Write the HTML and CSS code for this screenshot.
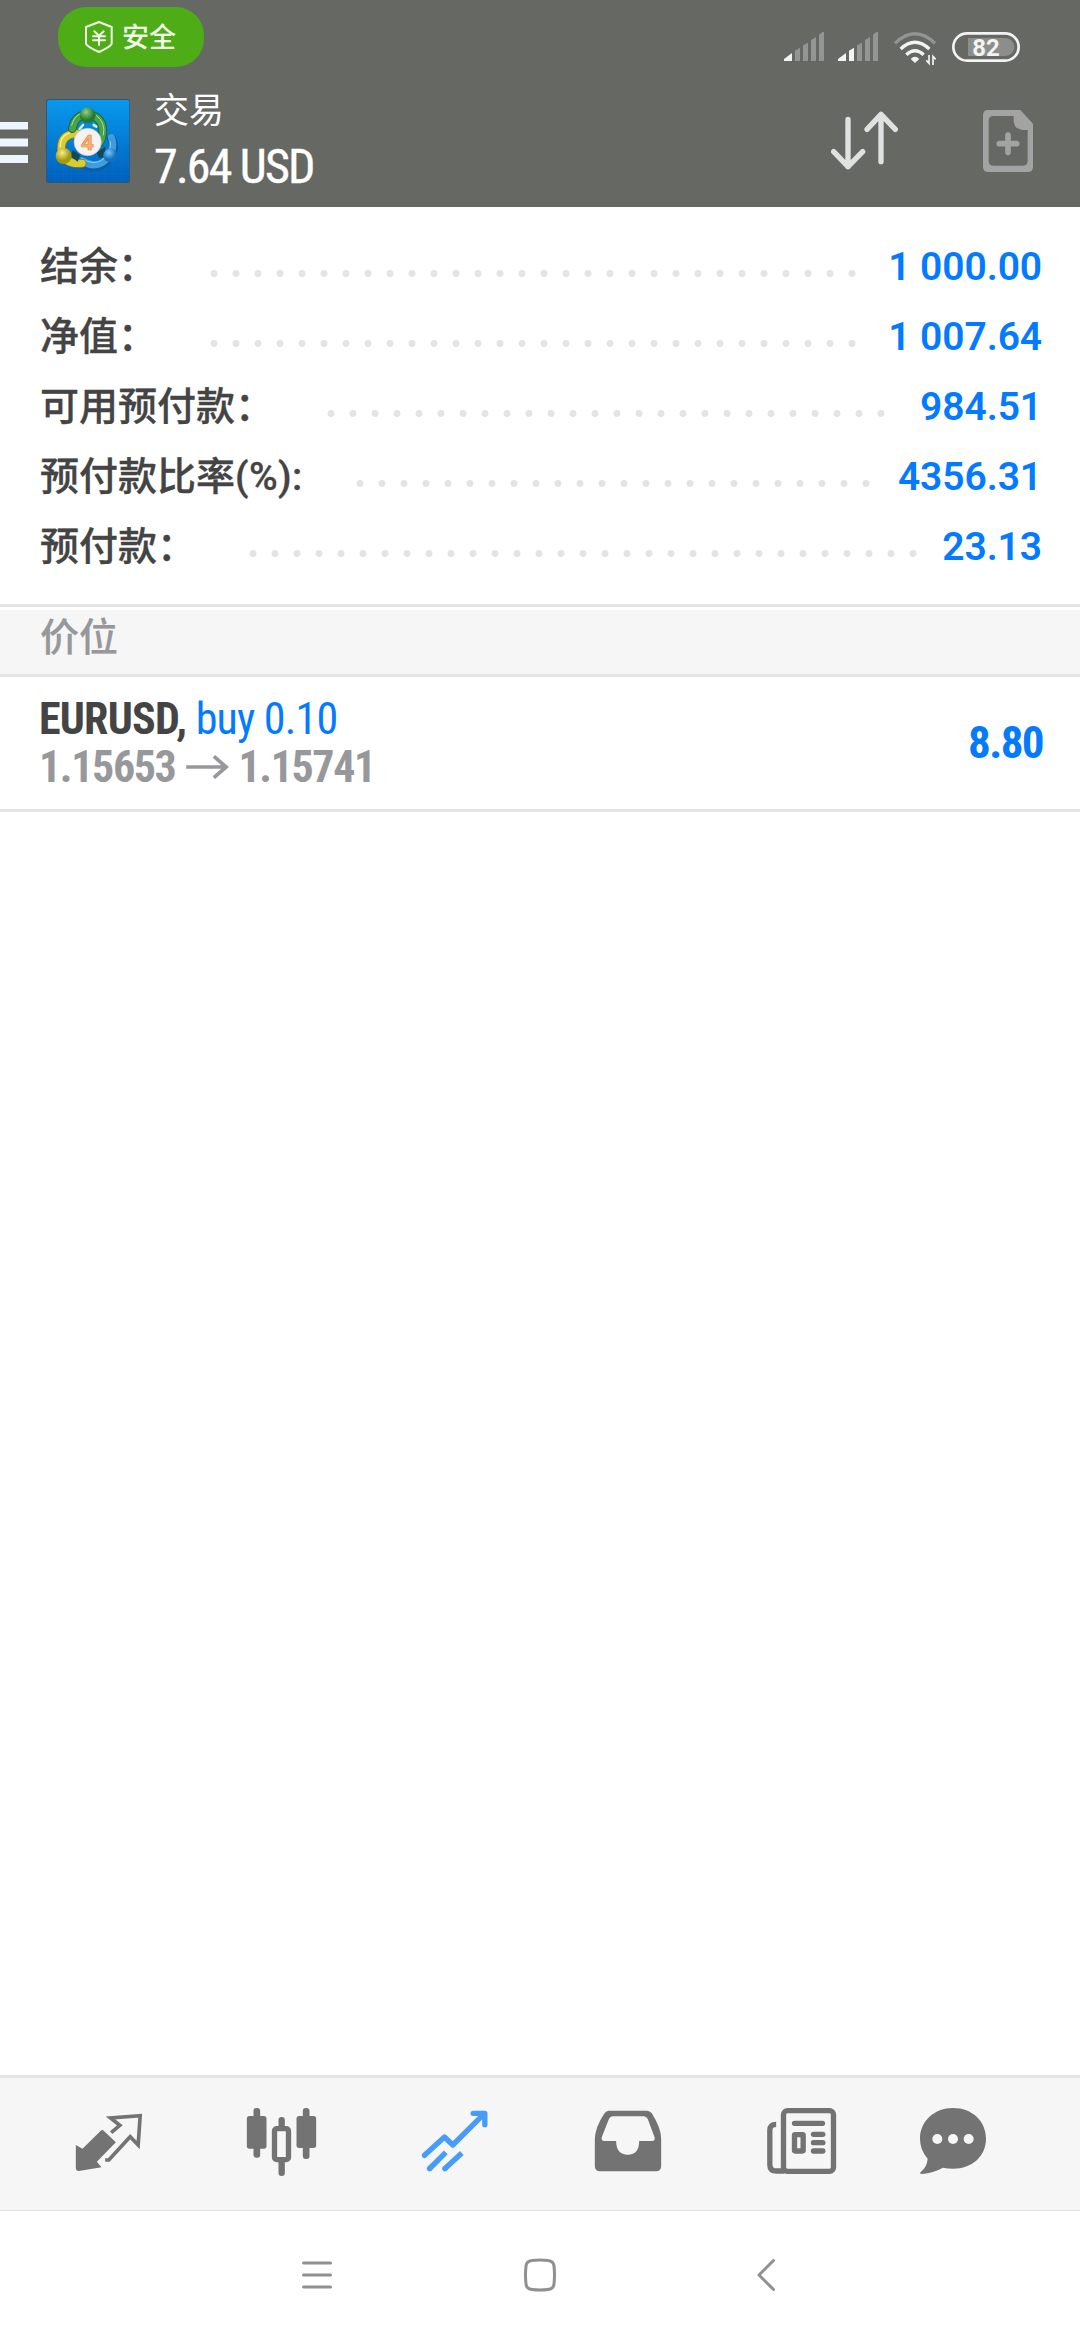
FILE: index.html
```html
<!DOCTYPE html>
<html lang="zh-CN">
<head>
<meta charset="utf-8">
<title>交易</title>
<link rel="stylesheet" href="styles.css">
</head>
<body>
<div class="screen">
  <header class="header">
    <div class="status">
      <div class="pill">
        <svg class="shield" viewBox="252 57 90 102" fill="none" stroke="#f1fdea" stroke-width="6" stroke-linejoin="round" stroke-linecap="round"><path d="M297 63 335 78V128Q333 136 297 153Q260 136 258 128V78Z"/><path d="M283 91 297 104 311 91M297 104V132M279 106H315M279 118H315" stroke-width="6"/></svg>
        <span>安全</span>
      </div>
      <svg class="signals" viewBox="72 90 708 111">
        <g fill="#949494"><path d="M105 152 120 143V183H105ZM129 136 144 128V183H129ZM153 120 168 111V183H153ZM177 104 187 96H192V183H177Z"/><path d="M291 136 306 128V183H291ZM315 120 330 111V183H315ZM339 104 349 96H354V183H339Z"/></g>
        <path fill="#f3f3f3" d="M72 177 96 159V183H72ZM234 177 258 159V183H234ZM267 152 282 143V183H267Z"/>
        <g fill="none" stroke-width="10"><path stroke="#949494" d="M405 130Q465 73 525 130"/><g stroke="#f3f3f3"><path d="M422 147Q465 107 508 147"/><path d="M439 164Q465 140 491 164"/></g></g>
        <path fill="#f3f3f3" d="M452 177Q465 163 478 177L465 189Z"/>
        <path d="M507 165V190L499 181M519 195V169L527 178" fill="none" stroke="#f3f3f3" stroke-width="5"/>
        <rect x="580" y="100" width="196" height="82" rx="41" fill="none" stroke="#f3f3f3" stroke-width="8"/>
        <path fill="#8d8e8b" d="M624 114H736A27 27 0 0 1 736 168H624Z"/>
        <text class="battery" x="678" y="167">82</text>
      </svg>
    </div>
    <div class="actions">
      <svg class="menu" viewBox="0 0 28 41" fill="#edf5ff"><path d="M0 0H28V7.5H0ZM0 16.5H28V24.5H0ZM0 33H28V41H0Z"/></svg>
      <svg class="logo" viewBox="138 297 252 252">
        <defs>
          <linearGradient id="sky" x1="0" y1="0" x2="0" y2="1"><stop offset="0" stop-color="#0799ee"/><stop offset="1" stop-color="#0160bd"/></linearGradient>
          <radialGradient id="green" cx=".4" cy=".3"><stop offset="0" stop-color="#8fd08b"/><stop offset="1" stop-color="#227a2d"/></radialGradient>
          <radialGradient id="gold" cx=".4" cy=".3"><stop offset="0" stop-color="#f5f08a"/><stop offset="1" stop-color="#a39910"/></radialGradient>
          <radialGradient id="blue" cx=".4" cy=".3"><stop offset="0" stop-color="#77c8f8"/><stop offset="1" stop-color="#1171bd"/></radialGradient>
        </defs>
        <rect x="138" y="297" width="252" height="252" rx="10" fill="#37556b"/>
        <rect x="141" y="300" width="247" height="246" rx="7" fill="url(#sky)"/>
        <path d="M165 300V546M190 300V546M215 300V546M240 300V546M265 300V546M290 300V546M315 300V546M340 300V546M365 300V546M141 325H387M141 374H387M141 423H387M141 472H387M141 521H387" stroke="#3aaaf5" stroke-opacity=".22"/>
        <g fill="none" stroke-linecap="round">
          <path d="M240 490Q286 514 320 484Q352 450 334 414" stroke="#0c5ca6" stroke-width="27"/>
          <path d="M248 483Q286 508 317 480Q348 450 334 412" stroke="#3f9ddd" stroke-width="21"/>
          <path d="M243 474Q282 500 310 477Q336 455 331 425" stroke="#8bd0f4" stroke-width="3"/>
          <path d="M230 401Q184 402 184 445Q188 494 246 490" stroke="#817c16" stroke-width="27"/>
          <path d="M230 401Q184 402 184 445Q188 494 246 490" stroke="#d8cc32" stroke-width="22"/>
          <path d="M226 395Q180 400 181 440" stroke="#f7f19b" stroke-width="4"/>
          <path d="M217 386Q224 346 263 342Q312 352 308 400Q306 418 299 429" stroke="#22692c" stroke-width="26"/>
          <path d="M217 386Q224 346 263 342Q312 352 308 400Q306 418 299 429" stroke="#49a34c" stroke-width="20"/>
          <path d="M215 376Q222 348 242 341M289 346Q318 369 310 405" stroke="#a5dda0" stroke-width="3"/>
          <path d="M239 387 249 375M289 380 281 375" stroke="#d9ebca" stroke-width="8"/>
        </g>
        <path d="M219 450 240 466 233 485 210 468ZM290 458 315 440 320 468 298 475Z" fill="#124a57"/>
        <circle cx="263" cy="346" r="24" fill="url(#green)"/>
        <circle cx="191" cy="468" r="24" fill="url(#gold)"/>
        <circle cx="331" cy="466" r="21" fill="url(#blue)"/>
        <circle cx="263" cy="426" r="41" fill="#f5f3f2" stroke="#b8c6c3" stroke-width="2"/>
        <text class="logo-digit" x="262" y="449">4</text>
      </svg>
      <div class="titles"><div class="title">交易</div><div class="profit cond">7.64 USD</div></div>
      <svg class="sort" viewBox="214 330 201 186" fill="none" stroke="#e1e1e1" stroke-width="16" stroke-linecap="round" stroke-linejoin="round"><path d="M265 358V500M222 455 265 500 309 455M364 485V343M322 388 364 343 407 388"/></svg>
      <svg class="order" viewBox="669 330 150 186"><path fill="#a3a3a3" fill-rule="evenodd" d="M684 330H781L819 371V500Q819 516 803 516H685Q669 516 669 500V346Q669 330 684 330ZM700 348Q686 348 686 362V483Q686 497 700 497H789Q803 497 803 483V390H786Q762 386 761 362V348Z"/><path d="M744 405V457M718 431H770" stroke="#a3a3a3" stroke-width="17" stroke-linecap="round"/></svg>
    </div>
  </header>

  <main class="content">
    <section class="summary">
      <div class="row"><span class="label">结余：</span><i class="dots" style="width:660px"></i><b class="value">1 000.00</b></div>
      <div class="row"><span class="label">净值：</span><i class="dots" style="width:660px"></i><b class="value">1 007.64</b></div>
      <div class="row"><span class="label">可用预付款：</span><i class="dots" style="width:572px"></i><b class="value">984.51</b></div>
      <div class="row"><span class="label">预付款比率<span class="ratio">(%):</span></span><i class="dots" style="width:528px"></i><b class="value">4356.31</b></div>
      <div class="row"><span class="label">预付款：</span><i class="dots" style="width:682px"></i><b class="value">23.13</b></div>
    </section>
    <h2 class="section">价位</h2>
    <section class="position">
      <div class="deal">
        <div class="symbol cond"><b>EURUSD,</b> <span class="side">buy 0.10</span></div>
        <div class="prices"><span class="cond">1.15653</span><svg class="arrow" viewBox="560 488 128 72" fill="none" stroke="#97989b" stroke-width="11"><path d="M560 524H682M643 492 680 524 643 556"/></svg><span class="cond">1.15741</span></div>
      </div>
      <div class="gain cond">8.80</div>
    </section>
  </main>

  <nav class="tabs">
    <svg viewBox="85.5 132 240 240"><path fill="#737373" d="M187 210 226 247 169 305 183 322 115 333Q106 333 106 324V255L126 266L180 213Q184 209 187 210Z"/><path fill="none" stroke="#737373" stroke-width="11" d="M212 218 238 196 210 174 299 167 293 255 269 230 205 300H194"/></svg>
    <svg viewBox="604.5 132 240 240" fill="#737373"><rect x="639" y="144" width="20" height="149" rx="9"/><rect x="619" y="168" width="59" height="98" rx="8"/><rect x="787" y="144" width="20" height="153" rx="9"/><rect x="768" y="168" width="59" height="96" rx="8"/><rect x="714" y="171" width="19" height="177" rx="9"/><rect x="702" y="206" width="42" height="93" rx="7" fill="#f6f6f6" stroke="#737373" stroke-width="16"/></svg>
    <svg viewBox="43.5 132 240 240" fill="none" stroke="#469cfb" stroke-width="16" stroke-linecap="round" stroke-linejoin="round"><path d="M72 286 132 231 157 255 249 163M218 160H253V194"/><path stroke-linecap="butt" d="M86 327 136 277M132 327 184 279"/><path d="M87 326 88 325M133 326 134 325"/></svg>
    <svg viewBox="562.5 132 240 240"><path fill="#737373" fill-rule="evenodd" d="M625 152H740Q748 152 754 160Q782 205 782 236V318Q782 334 766 334H599Q583 334 583 318V236Q584 202 611 161Q617 152 625 152ZM638 169Q629 169 625 178L604 231Q601 243 612 243H647Q647 284 682 284Q716 284 716 243H754Q765 243 762 231L742 178Q738 169 728 169Z"/></svg>
    <svg viewBox="61.5 132 240 240" fill="none" stroke="#737373" stroke-width="16"><rect x="129" y="152" width="150" height="182" rx="12"/><path d="M107 193Q88 193 88 211V314Q88 333 108 333H132"/><path d="M162 190H246M219 223H247M219 248H247M219 273H247" stroke-linecap="round"/><rect x="162" y="224" width="26" height="49" rx="2"/></svg>
    <svg viewBox="519 132 240 240"><path fill="#737373" d="M639 144C697 144 738 184 738 236C738 289 695 326 640 326Q622 326 609 323Q580 339 546 342Q536 341 543 335Q561 321 563 296Q540 270 540 236C540 184 583 144 639 144Z"/><g fill="#f6f6f6"><circle cx="592" cy="237" r="15"/><circle cx="639" cy="237" r="15"/><circle cx="686" cy="237" r="15"/></g></svg>
  </nav>
  <div class="system">
    <svg viewBox="0 0 34 34"><path d="M3.500 5H30.500M3.500 17H30.500M3.500 29H30.500"/></svg>
    <svg viewBox="0 0 34 34"><path d="M9 2.500Q17 1.500 25 2.500Q30.500 3 31 8Q32 17 31 26Q30.500 31 25 31.500Q17 32.500 9 31.500Q3.500 31 3 26Q2 17 3 8Q3.500 3 9 2.500Z"/></svg>
    <svg viewBox="0 0 34 34"><path d="M27.500 2.500 13 17 27.500 31.500"/></svg>
  </div>
</div>
</body>
</html>
```
FILE: styles.css
```css
* { box-sizing: border-box; }
body { margin: 0; background: #fff; font-family: Roboto, "Noto Sans CJK SC", sans-serif; color: #444; }
svg { display: block; flex: none; }
.screen { display: flex; flex-direction: column; width: 1080px; height: 2340px; }

.header { height: 207px; background: #666864; }
.status { display: flex; justify-content: space-between; height: 70px; padding: 7px 60px 0 58px; }
.pill { display: flex; align-items: center; gap: 8px; width: 146px; height: 60px; padding: 2px 0 0 26px; border-radius: 28px; background: #4eac17; color: #f1fdea; font-size: 27px; font-weight: 500; line-height: 58px; }
.shield { width: 30px; height: 34px; margin-top: -3px; }
.signals { width: 236px; height: 37px; margin-top: 23px; }
.battery { font: 700 72px Roboto, sans-serif; fill: #f3f3f3; text-anchor: middle; }
.actions { display: flex; align-items: flex-start; padding-top: 29px; }
.menu { width: 28px; height: 41px; margin-top: 23px; }
.logo { width: 84px; height: 84px; margin-left: 18px; }
.logo-digit { font: 700 64px "Open Sans", sans-serif; fill: #f7b376; stroke: #e98034; stroke-width: 2; text-anchor: middle; }
.titles { margin: -14px 0 0 24px; color: #fff; white-space: nowrap; }
.title { font-size: 35px; line-height: 54px; }
.profit { margin-top: -2px; font-size: 48px; line-height: 60px; letter-spacing: -1.8px; -webkit-text-stroke: 0.4px; }
.sort { width: 67px; height: 62px; margin: 11px 85px 0 auto; }
.order { width: 50px; height: 62px; margin: 11px 47px 0 0; }
.cond { font-stretch: 75%; }

.content { flex: 1; }
.summary { height: 400px; padding-top: 24px; border-bottom: 3px solid #e4e4e4; }
.row { display: flex; align-items: center; height: 70px; padding: 0 38px 0 40px; font-size: 39px; white-space: nowrap; }
.label { margin-top: -7px; font-weight: 500; -webkit-text-stroke: 0.3px; }
.ratio { letter-spacing: 0.4px; }
.dots { height: 7px; margin: 15px 0 0 46px; background: radial-gradient(circle at center, #e4e4e4 3.2px, transparent 3.8px) 0 0 / 22px 7px repeat-x; }
.value { margin: 2px 0 0 auto; font-weight: 650; letter-spacing: -0.1px; color: #047bff; }
.section { height: 67px; margin: 3px 0 0; padding-left: 40px; border-bottom: 3px solid #e4e4e4; background: #f6f6f6; color: #97989b; font-size: 39px; font-weight: 500; line-height: 57px; -webkit-text-stroke: 0.2px; }
.position { display: flex; justify-content: space-between; align-items: center; height: 135px; padding: 0 38px 0 39px; border-bottom: 3px solid #e4e4e4; font-size: 44px; line-height: 48px; letter-spacing: -0.8px; white-space: nowrap; }
.side, .gain { color: #047bff; }
.prices { display: flex; align-items: center; color: #97989b; font-weight: 700; letter-spacing: -1.4px; }
.arrow { width: 43px; height: 24px; margin: 0 9px 0 11px; }
.gain { margin-right: -1px; font-size: 45px; font-weight: 700; letter-spacing: -1.6px; }

.tabs { display: grid; grid-template-columns: repeat(5, 173px) 132px; justify-items: center; align-items: center; height: 136px; padding-left: 22px; border-top: 3px solid #e4e4e4; border-bottom: 1px solid #e0e0e0; background: #f6f6f6; }
.tabs svg { width: 80px; height: 80px; }
.system { display: flex; align-items: center; gap: 189px; height: 129px; padding: 0 0 2px 300px; }
.system svg { width: 34px; height: 34px; fill: none; stroke: #909090; stroke-width: 3; stroke-linecap: round; stroke-linejoin: round; }
```
